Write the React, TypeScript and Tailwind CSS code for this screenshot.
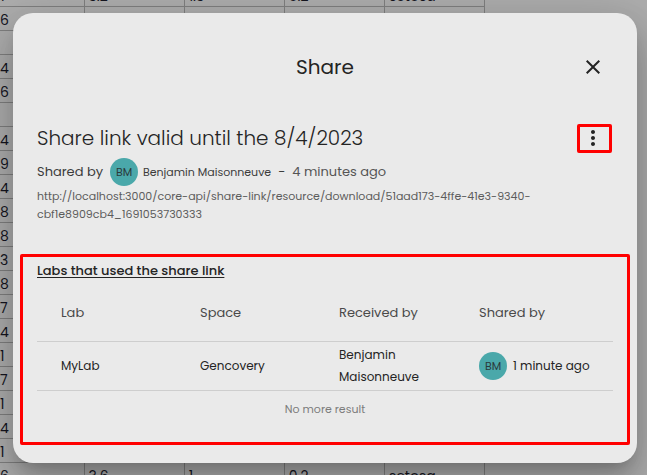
import { MdClose, MdMoreVert } from 'react-icons/md'

interface LabUse {
  lab: string
  space: string
  receivedBy: string
  initials: string
  sharedAt: string
}

const labUses: LabUse[] = [
  {
    lab: 'MyLab',
    space: 'Gencovery',
    receivedBy: 'Benjamin Maisonneuve',
    initials: 'BM',
    sharedAt: '1 minute ago',
  },
]

const sheetRows: string[][] = [
  ['7', '3.2', '1.3', '0.2', 'setosa'],
  ['6', '', '', '', ''],
  ['', '', '', '', ''],
  ['4', '', '', '', ''],
  ['6', '', '', '', ''],
  ['', '', '', '', ''],
  ['4', '', '', '', ''],
  ['9', '', '', '', ''],
  ['4', '', '', '', ''],
  ['8', '', '', '', ''],
  ['8', '', '', '', ''],
  ['3', '', '', '', ''],
  ['8', '', '', '', ''],
  ['7', '', '', '', ''],
  ['4', '', '', '', ''],
  ['1', '', '', '', ''],
  ['7', '', '', '', ''],
  ['1', '', '', '', ''],
  ['4', '', '', '', ''],
  ['1', '', '', '', ''],
  ['6', '3.6', '1', '0.2', 'setosa'],
]

function Avatar({ initials }: { initials: string }) {
  return (
    <span className="flex size-7 shrink-0 items-center justify-center rounded-full bg-[#4aa8aa] text-[11px] text-[#2a3a3c]">
      {initials}
    </span>
  )
}

// Spreadsheet behind the dialog, scrolled by part of a row
function Sheet() {
  return (
    <div className="absolute inset-0 overflow-hidden" aria-hidden="true">
      <table className="-mt-[18px] w-[485px] table-fixed border-collapse text-[14px] leading-[18px] text-[#15151f]">
        <tbody>
          {sheetRows.map((row, i) => (
            <tr key={i} className="h-6">
              {row.map((value, j) => (
                <td
                  key={j}
                  className="border-r border-b border-[#7f7f7f] p-0 pt-1 pl-1 first:w-[84px] first:pl-0"
                >
                  {value}
                </td>
              ))}
            </tr>
          ))}
        </tbody>
      </table>
    </div>
  )
}

function LabTable() {
  return (
    <table className="w-full table-fixed text-left leading-[22px]">
      <thead>
        <tr className="h-14 border-b border-[#cecece] text-[13px] text-[#4a4a4a]">
          <th className="w-[163px] pl-6 font-normal">Lab</th>
          <th className="w-[139px] font-normal">Space</th>
          <th className="w-[140px] font-normal">Received by</th>
          <th className="font-normal">Shared by</th>
        </tr>
      </thead>
      <tbody>
        {labUses.map((use) => (
          <tr key={use.lab} className="h-[49px] border-b border-[#cecece] text-[12px] text-[#242424]">
            <td className="pl-6">{use.lab}</td>
            <td>{use.space}</td>
            <td className="pr-10">{use.receivedBy}</td>
            <td>
              <div className="flex items-center gap-1.5">
                <Avatar initials={use.initials} />
                <span className="whitespace-nowrap">{use.sharedAt}</span>
              </div>
            </td>
          </tr>
        ))}
      </tbody>
    </table>
  )
}

export default function App() {
  return (
    <div className="relative min-h-screen bg-[#adadad] py-[13px] pr-2.5 pl-[13px] font-[Poppins,Inter,sans-serif]">
      <Sheet />

      <div
        role="dialog"
        aria-labelledby="share-title"
        className="relative rounded-[20px] bg-[#eaeaea] px-6 pt-9 pb-[18px] text-[#242424] shadow-[0_11px_15px_-7px_rgba(0,0,0,0.2),0_24px_38px_3px_rgba(0,0,0,0.14),0_9px_46px_8px_rgba(0,0,0,0.12)]"
      >
        <header className="grid grid-cols-[1fr_auto_1fr] items-center">
          <h1 id="share-title" className="col-start-2 text-[20px] leading-9 font-normal">
            Share
          </h1>
          <button type="button" aria-label="Close" className="mr-2 justify-self-end">
            <MdClose className="size-6" />
          </button>
        </header>

        <div className="mt-[39px] flex items-start justify-between">
          <h2 className="text-[20px] leading-7 font-light">Share link valid until the 8/4/2023</h2>
          <button
            type="button"
            aria-label="Share link options"
            className="mr-px flex h-[29px] w-[35px] items-center justify-center rounded-xs border-3 border-[#ff0000] pr-1 pb-0.5"
          >
            <MdMoreVert className="size-6 shrink-0" />
          </button>
        </div>

        <div className="mt-[5px] flex items-center text-[13px] text-[#3c3c3c]">
          <span className="mr-[7px]">Shared by</span>
          <Avatar initials="BM" />
          <span className="ml-[5px] text-[11px]">Benjamin Maisonneuve</span>
          <span className="mx-[7px]">-</span>
          <span className="text-[#555555]">4 minutes ago</span>
        </div>
        <p className="mt-px text-[11px] leading-[18px] text-[#5c5c5c]">
          http://localhost:3000/core-api/share-link/resource/download/51aad173-4ffe-41e3-9340-
          <wbr />
          cbf1e8909cb4_1691053730333
        </p>

        <section className="-mx-[17px] mt-[31px] rounded-xs border-3 border-[#ff0000] px-3.5 pt-1 pb-[23px]">
          <h3 className="mb-1 text-[13px] leading-5 font-medium underline underline-offset-2">
            Labs that used the share link
          </h3>
          <LabTable />
          <p className="mt-2 text-center text-[11px] leading-5 text-[#7c7c7c]">No more result</p>
        </section>
      </div>
    </div>
  )
}
